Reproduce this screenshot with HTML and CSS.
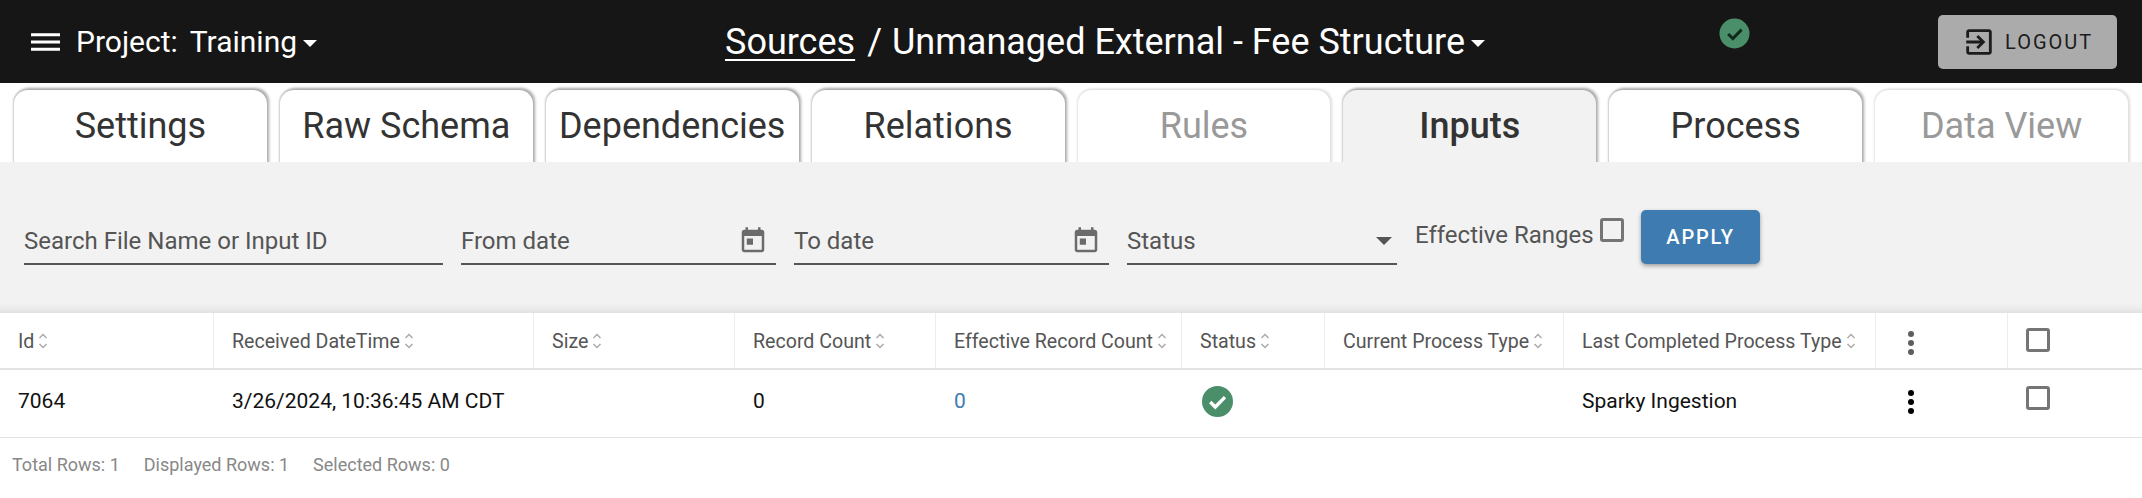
FILE: index.html
```html
<!DOCTYPE html>
<html lang="en">
<head>
<meta charset="utf-8">
<title>Inputs</title>
<link rel="stylesheet" href="styles.css">
</head>
<body>
<header class="topbar">
  <svg class="menu" viewBox="0 0 30 22"><path d="M0 2h30v3H0zM0 9.500h30v3H0zM0 17h30v3H0z"/></svg>
  <div class="project"><span class="project-label">Project:</span><span>Training</span><i class="caret"></i></div>
  <div class="crumbs"><a class="crumb-link">Sources</a><span class="crumb-sep">/</span><span>Unmanaged External - Fee Structure</span><i class="caret"></i></div>
  <svg class="status-top" viewBox="0 0 32 32"><circle cx="16" cy="16" r="15.500"/><path d="M9.500 16.500l4.800 4.800 9-9.300"/></svg>
  <button class="logout">
    <svg viewBox="0 0 24 24"><path d="M10.090 15.590L11.500 17l5-5-5-5-1.410 1.410L12.670 11H3v2h9.670l-2.580 2.590zM19 3H5c-1.110 0-2 .9-2 2v4h2V5h14v14H5v-4H3v4c0 1.100.89 2 2 2h14c1.100 0 2-.9 2-2V5c0-1.100-.9-2-2-2z"/></svg>
    <span>LOGOUT</span>
  </button>
</header>
<nav class="tabs">
  <div class="tab">Settings</div>
  <div class="tab">Raw Schema</div>
  <div class="tab">Dependencies</div>
  <div class="tab">Relations</div>
  <div class="tab tab-off">Rules</div>
  <div class="tab tab-on">Inputs</div>
  <div class="tab">Process</div>
  <div class="tab tab-off">Data View</div>
</nav>
<section class="filters">
  <div class="field f-search"><span>Search File Name or Input ID</span></div>
  <div class="field f-from"><span>From date</span><svg class="cal" viewBox="0 0 24 24"><path d="M19 3h-1V1h-2v2H8V1H6v2H5c-1.110 0-2 .9-2 2v14c0 1.100.89 2 2 2h14c1.100 0 2-.9 2-2V5c0-1.100-.9-2-2-2zm0 16H5V8h14v11zM7 10h5v5H7z"/></svg></div>
  <div class="field f-to"><span>To date</span><svg class="cal" viewBox="0 0 24 24"><path d="M19 3h-1V1h-2v2H8V1H6v2H5c-1.110 0-2 .9-2 2v14c0 1.100.89 2 2 2h14c1.100 0 2-.9 2-2V5c0-1.100-.9-2-2-2zm0 16H5V8h14v11zM7 10h5v5H7z"/></svg></div>
  <div class="field f-status"><span>Status</span><i class="select-arrow"></i></div>
  <div class="effective"><span>Effective Ranges</span><i class="check"></i></div>
  <button class="apply">APPLY</button>
</section>
<section class="grid">
  <div class="row head">
    <div class="cell">Id<svg class="sort" viewBox="0 0 10 18"><path d="M1.500 6L5 2.500 8.500 6M1.500 12L5 15.500 8.500 12"/></svg></div>
    <div class="cell">Received DateTime<svg class="sort" viewBox="0 0 10 18"><path d="M1.500 6L5 2.500 8.500 6M1.500 12L5 15.500 8.500 12"/></svg></div>
    <div class="cell">Size<svg class="sort" viewBox="0 0 10 18"><path d="M1.500 6L5 2.500 8.500 6M1.500 12L5 15.500 8.500 12"/></svg></div>
    <div class="cell">Record Count<svg class="sort" viewBox="0 0 10 18"><path d="M1.500 6L5 2.500 8.500 6M1.500 12L5 15.500 8.500 12"/></svg></div>
    <div class="cell">Effective Record Count<svg class="sort" viewBox="0 0 10 18"><path d="M1.500 6L5 2.500 8.500 6M1.500 12L5 15.500 8.500 12"/></svg></div>
    <div class="cell">Status<svg class="sort" viewBox="0 0 10 18"><path d="M1.500 6L5 2.500 8.500 6M1.500 12L5 15.500 8.500 12"/></svg></div>
    <div class="cell">Current Process Type<svg class="sort" viewBox="0 0 10 18"><path d="M1.500 6L5 2.500 8.500 6M1.500 12L5 15.500 8.500 12"/></svg></div>
    <div class="cell">Last Completed Process Type<svg class="sort" viewBox="0 0 10 18"><path d="M1.500 6L5 2.500 8.500 6M1.500 12L5 15.500 8.500 12"/></svg></div>
    <div class="cell cell-kebab"><svg class="kebab" viewBox="0 0 6 24"><circle cx="3" cy="3" r="3"/><circle cx="3" cy="12" r="3"/><circle cx="3" cy="21" r="3"/></svg></div>
    <div class="cell cell-check"><i class="check"></i></div>
  </div>
  <div class="row body">
    <div class="cell">7064</div>
    <div class="cell">3/26/2024, 10:36:45 AM CDT</div>
    <div class="cell"></div>
    <div class="cell">0</div>
    <div class="cell link">0</div>
    <div class="cell"><svg class="status-ok" viewBox="0 0 32 32"><circle cx="16" cy="16" r="16"/><path d="M8.500 16.500l5.200 5.200 10-10.200"/></svg></div>
    <div class="cell"></div>
    <div class="cell">Sparky Ingestion</div>
    <div class="cell cell-kebab"><svg class="kebab" viewBox="0 0 6 24"><circle cx="3" cy="3" r="3"/><circle cx="3" cy="12" r="3"/><circle cx="3" cy="21" r="3"/></svg></div>
    <div class="cell cell-check"><i class="check"></i></div>
  </div>
</section>
<footer class="summary"><span>Total Rows: 1</span><span>Displayed Rows: 1</span><span>Selected Rows: 0</span></footer>
</body>
</html>
```
FILE: styles.css
```css
* { box-sizing: border-box; }
html, body { margin: 0; height: 498px; overflow: hidden; background: #fff; }
body { font-family: Roboto, "Liberation Sans", sans-serif; color: #222; }
i { display: block; }
.topbar { height: 83px; background: #161616; color: #fff; display: flex; align-items: center; padding: 0 25px 0 31px; font-size: 30px; }
.menu { width: 29px; height: 22px; fill: #fff; flex: none; }
.project { display: flex; align-items: center; margin-left: 16px; width: 649px; }
.project-label { margin-right: 12px; }
.caret { width: 0; height: 0; border: 7px solid transparent; border-top-color: #fff; border-bottom: 0; margin-left: 6px; margin-top: 3px; }
.crumbs { display: flex; align-items: center; font-size: 36px; }
.crumb-link { text-decoration: underline; text-underline-offset: 5px; text-decoration-thickness: 2px; }
.crumb-sep { margin: 0 10px 0 12px; }
.status-top { width: 31px; height: 31px; margin-left: 234px; margin-top: -17px; flex: none; }
.status-top circle, .status-ok circle { fill: #4a8f69; }
.status-top path { fill: none; stroke: #0f2a1c; stroke-width: 3; }
.status-ok path { fill: none; stroke: #fff; stroke-width: 3.500; }
.logout { margin-left: auto; width: 179px; height: 54px; background: #ababab; border: 0; border-radius: 5px; display: flex; align-items: center; padding: 0 0 0 24px; font: 400 20px Roboto, sans-serif; letter-spacing: 2px; color: #1c1c1c; }
.logout svg { width: 34px; height: 34px; fill: #1c1c1c; margin-right: 9px; }
.tabs { height: 79px; display: flex; gap: 13px; padding: 7px 14px 0 14px; overflow: hidden; }
.tab { flex: 1 1 0; height: 100px; display: block; text-align: center; padding-top: 14px; font-size: 36px; line-height: 44px; color: #333; border-radius: 14px; background: #fff; box-shadow: 2px -2px 3px #a9a9a9, -1px -1px 2px #ccc; }
.tab-off { color: #999; box-shadow: 2px -1px 3px #ddd, -1px -1px 2px #e4e4e4; }
.tab-on { background: #f2f2f2; font-weight: 500; }
.filters { height: 151px; background: #f2f2f2; display: flex; align-items: flex-start; padding: 48px 0 0 24px; box-shadow: inset 0 -12px 10px -10px rgba(0,0,0,.1); }
.field { height: 55px; border-bottom: 2px solid #555; display: flex; align-items: flex-end; justify-content: space-between; padding-bottom: 7px; margin-right: 18px; color: #555; font-size: 24px; line-height: 30px; }
.f-search { width: 419px; }
.f-from { width: 315px; }
.f-to { width: 315px; }
.f-status { width: 270px; margin-right: 18px; }
.cal { width: 30px; height: 30px; fill: #6b6b6b; margin-right: 8px; }
.select-arrow { width: 0; height: 0; border: 8px solid transparent; border-top-color: #555; border-bottom: 0; margin: 0 5px 11px 0; }
.effective { display: flex; align-items: flex-start; color: #555; font-size: 24px; line-height: 30px; padding-top: 10px; width: 226px; }
.effective .check { margin: -2px 0 0 6px; }
.check { width: 24px; height: 24px; border: 3px solid #757575; border-radius: 3px; flex: none; }
.apply { width: 119px; height: 54px; background: #3e7bb0; color: #fff; border: 0; border-radius: 5px; font: 500 20px Roboto, sans-serif; letter-spacing: 1.800px; box-shadow: 0 2px 4px rgba(0,0,0,.35); }
.grid { background: #fff; }
.row { display: grid; grid-template-columns: 214px 320px 201px 201px 246px 143px 239px 312px 132px 134px; }
.head { height: 57px; border-bottom: 2px solid #e3e3e3; color: #555; font-size: 19.600px; }
.body { height: 68px; border-bottom: 1px solid #e3e3e3; color: #111; font-size: 21px; }
.cell { display: flex; align-items: center; padding-left: 18px; }
.head .cell { border-right: 1px solid #ededed; padding-top: 1px; }
.head .cell:last-child { border-right: 0; }
.body .cell { padding-bottom: 5px; }
.sort { width: 10px; height: 18px; margin-left: 4px; fill: none; stroke: #aaa; stroke-width: 1.500; flex: none; }
.link { color: #3e7bb0; }
.status-ok { width: 31px; height: 31px; margin-left: 2px; }
.kebab { width: 6px; height: 24px; margin-left: 14px; fill: #000; }
.head .kebab { fill: #5e5e5e; margin-top: 4px; }
.body .kebab { margin-top: 1px; }
.cell-check .check { margin-bottom: 2px; }
.body .cell-check .check { margin-bottom: 6px; }
.summary { display: flex; gap: 24px; padding: 17px 0 0 12px; font-size: 18px; line-height: 20px; color: #888; }
```
